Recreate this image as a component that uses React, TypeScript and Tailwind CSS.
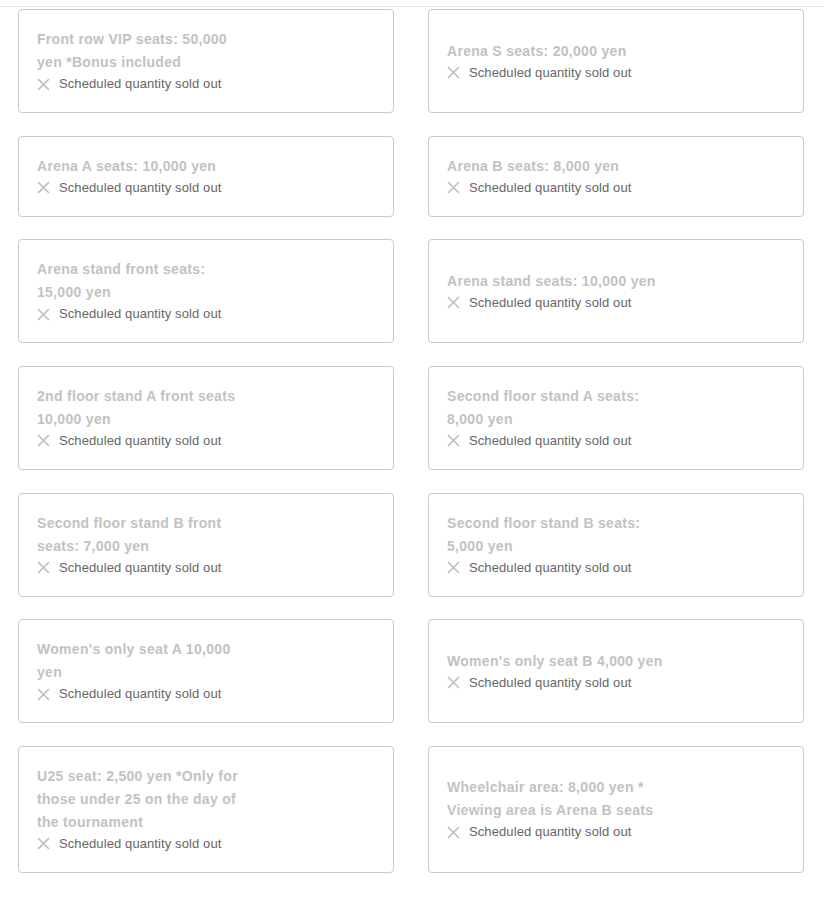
import React from "react";

interface Seat {
  lines: string[];
}

// line breaks follow the original card layout
const seats: Seat[] = [
  { lines: ["Front row VIP seats: 50,000", "yen *Bonus included"] },
  { lines: ["Arena S seats: 20,000 yen"] },
  { lines: ["Arena A seats: 10,000 yen"] },
  { lines: ["Arena B seats: 8,000 yen"] },
  { lines: ["Arena stand front seats:", "15,000 yen"] },
  { lines: ["Arena stand seats: 10,000 yen"] },
  { lines: ["2nd floor stand A front seats", "10,000 yen"] },
  { lines: ["Second floor stand A seats:", "8,000 yen"] },
  { lines: ["Second floor stand B front", "seats: 7,000 yen"] },
  { lines: ["Second floor stand B seats:", "5,000 yen"] },
  { lines: ["Women's only seat A 10,000", "yen"] },
  { lines: ["Women's only seat B 4,000 yen"] },
  { lines: ["U25 seat: 2,500 yen *Only for", "those under 25 on the day of", "the tournament"] },
  { lines: ["Wheelchair area: 8,000 yen *", "Viewing area is Arena B seats"] },
];

function CrossIcon(): React.JSX.Element {
  return (
    <svg width="13" height="13" viewBox="0 0 13 13" className="shrink-0">
      <path d="M1 1L12 12M12 1L1 12" stroke="#bdbdbd" strokeWidth="1.6" />
    </svg>
  );
}

function SeatCard({ lines }: Seat): React.JSX.Element {
  return (
    <div className="flex flex-col justify-center rounded-[4px] border border-[#c9c9c9] bg-white px-[18px] py-[18px]">
      <p className="text-[14px] font-bold leading-[23px] tracking-[0.3px] text-[#c2c2c2]">
        {lines.map((l) => (
          <span key={l} className="block whitespace-nowrap">
            {l}
          </span>
        ))}
      </p>
      {/* sold-out status */}
      <div className="flex items-center gap-[9px] text-[13px] leading-[20px] tracking-[0.1px] text-[#666666]">
        <CrossIcon />
        <span>Scheduled quantity sold out</span>
      </div>
    </div>
  );
}

export default function App(): React.JSX.Element {
  return (
    <div className="min-h-screen w-full bg-white font-['Liberation_Sans',Arial,sans-serif]">
      <div className="h-[6px]" />
      <div className="border-t border-[#e6e6e6] pt-[2px]">
        <div className="grid grid-cols-2 gap-x-[34px] gap-y-[22.67px] pl-[18px] pr-[20px]">
          {seats.map((s) => (
            <SeatCard key={s.lines.join(" ")} lines={s.lines} />
          ))}
        </div>
      </div>
    </div>
  );
}
